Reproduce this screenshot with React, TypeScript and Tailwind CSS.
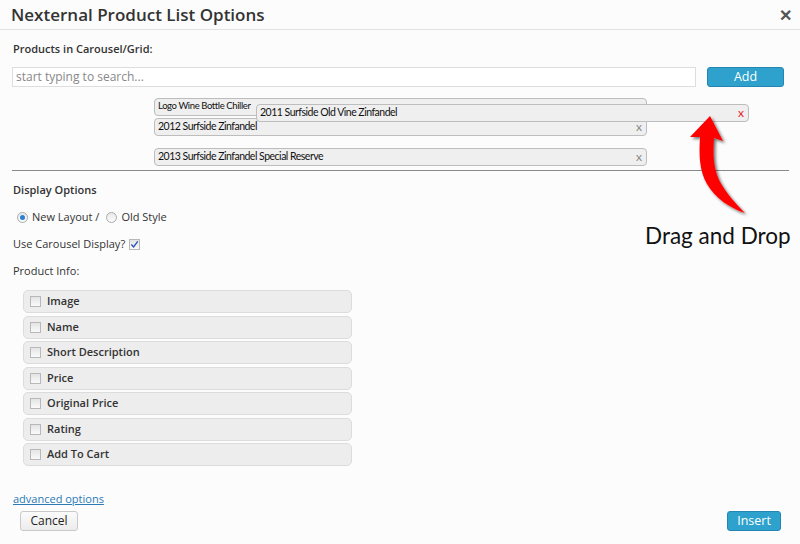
import React from "react";

const infoFields = [
  "Image",
  "Name",
  "Short Description",
  "Price",
  "Original Price",
  "Rating",
  "Add To Cart",
];

function ProductChip({
  name,
  top,
  remove = "text-[#888]",
  small = false,
}: {
  name: string;
  top: string;
  remove?: string;
  small?: boolean;
}) {
  return (
    <div
      className={`${top} flex h-[18px] w-[493px] items-center justify-between rounded-[4px] border border-[#bdbdbd] bg-[#efefef] pl-[3px] pr-[4px] font-['Lato'] text-[#111]`}
    >
      <span
        className={
          small
            ? "self-start text-[9.5px] leading-[13px] tracking-[-0.4px]"
            : "text-[10.5px] tracking-[-0.5px]"
        }
      >
        {name}
      </span>
      <span className={`${remove} text-[12px] leading-none`}>x</span>
    </div>
  );
}

function Box({ checked = false }: { checked?: boolean }) {
  return (
    <span className="flex h-[11px] w-[11px] items-center justify-center border border-[#b8b8b8] bg-gradient-to-b from-[#e4e4e4] to-[#fafafa]">
      {checked && (
        <svg viewBox="0 0 10 10" className="h-[9px] w-[9px]">
          <path d="M1.5 5 L4 7.8 L8.6 1.6" fill="none" stroke="#2a4fb8" strokeWidth="1.5" />
        </svg>
      )}
    </span>
  );
}

function Radio({ on = false }: { on?: boolean }) {
  return (
    <span className="flex h-[11px] w-[11px] items-center justify-center rounded-full border border-[#aaa] bg-gradient-to-b from-[#e8e8e8] to-[#fcfcfc]">
      {on && <span className="h-[5px] w-[5px] rounded-full bg-[#2b7fd4]" />}
    </span>
  );
}

export default function App() {
  return (
    <div className="relative h-[544px] w-[800px] overflow-hidden bg-[#fcfcfc] font-['Open_Sans'] text-[#333]">
      {/* header */}
      <div className="flex h-[30px] items-center justify-between border-b border-[#e2e2e2] pl-[11px] pr-[8px]">
        <h1 className="text-[17px] font-semibold leading-none text-[#333]">Nexternal Product List Options</h1>
        <span className="text-[16px] font-bold leading-none text-[#555]">✕</span>
      </div>

      <div className="px-[12px]">
        <div className="mt-[11px] pl-[1px] text-[11px] font-semibold leading-[16px]">Products in Carousel/Grid:</div>

        <div className="mt-[10px] flex h-[20px] items-center">
          <div className="flex h-[20px] w-[684px] items-center border border-[#ddd] bg-white pl-[3px] text-[12px] text-[#888]">
            start typing to search...
          </div>
          <button className="ml-[11px] h-[20px] w-[77px] rounded-[3px] border border-[#2386b3] bg-[#2ea2cc] text-[12.5px] leading-none text-white">
            Add
          </button>
        </div>

        <div className="ml-[142px] mt-[11px] flex flex-col">
          <ProductChip name="Logo Wine Bottle Chiller" top="" small />
          <ProductChip name="2012 Surfside Zinfandel" top="mt-[2px]" />
          <ProductChip name="2013 Surfside Zinfandel Special Reserve" top="mt-[12px]" />
        </div>

        <div className="mt-[4px] h-[1px] w-[777px] bg-[#8a8a8a]" />

        <div className="mt-[11px] pl-[1px] text-[11px] font-semibold leading-[16px]">Display Options</div>

        <div className="mt-[11px] flex items-center gap-[4px] pl-[5px] text-[11px] leading-[16px]">
          <Radio on />
          <span>New Layout /</span>
          <span className="ml-[3px]">
            <Radio />
          </span>
          <span>Old Style</span>
        </div>

        <div className="mt-[11px] flex items-center gap-[4px] pl-[1px] text-[11px] leading-[16px]">
          <span>Use Carousel Display?</span>
          <Box checked />
        </div>

        <div className="mt-[11px] pl-[1px] text-[11px] leading-[16px]">Product Info:</div>

        <div className="ml-[11px] mt-[11px] flex w-[329px] flex-col gap-[2.5px]">
          {infoFields.map((f) => (
            <div
              key={f}
              className="flex h-[23px] items-center gap-[6px] rounded-[5px] border border-[#dcdcdc] bg-[#ededed] pl-[6px] text-[11px] font-semibold"
            >
              <Box />
              <span>{f}</span>
            </div>
          ))}
        </div>

        <div className="mt-[25px] pl-[1px] text-[11px] leading-[16px]">
          <a className="text-[#2a7ab8] underline">advanced options</a>
        </div>

        <div className="mt-[4px] flex items-center justify-between">
          <button className="ml-[8px] h-[20px] w-[58px] rounded-[3px] border border-[#c9c9c9] bg-gradient-to-b from-[#fbfbfb] to-[#ececec] text-[12px] leading-none text-[#222]">
            Cancel
          </button>
          <button className="mr-[7px] h-[20px] w-[54px] rounded-[3px] border border-[#2386b3] bg-[#2ea2cc] text-[12.5px] leading-none text-white">
            Insert
          </button>
        </div>
      </div>

      {/* item being dragged */}
      <div className="absolute left-[256px] top-[104px]">
        <ProductChip name="2011 Surfside Old Vine Zinfandel" top="" remove="text-[#e8202a]" />
      </div>

      {/* annotation arrow */}
      <svg className="absolute left-[680px] top-[108px]" width="80" height="112" viewBox="0 0 80 112">
        <defs>
          <filter id="sh" x="-30%" y="-30%" width="160%" height="160%">
            <feDropShadow dx="2" dy="2" stdDeviation="1.5" floodColor="#000" floodOpacity="0.55" />
          </filter>
        </defs>
        <path
          filter="url(#sh)"
          fill="#ff0000"
          d="M30 8 L10 29 L20 29 C19 46 19 62 27 76 C35 90 50 100 65 105 C55 95 46 85 39 72 C33 58 33 45 34 30 L43 33 Z"
        />
      </svg>
      <div className="absolute left-[645px] top-[222px] font-['Lato'] text-[22.5px] leading-[28px] text-[#111]">
        Drag and Drop
      </div>
    </div>
  );
}
